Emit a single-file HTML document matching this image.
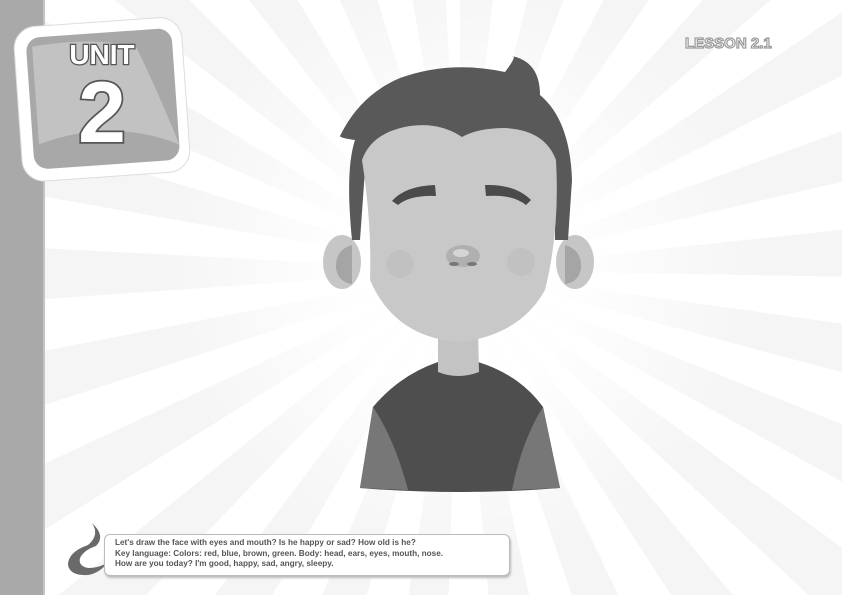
<!DOCTYPE html>
<html><head><meta charset="utf-8"><style>
html,body{margin:0;padding:0;}
body{width:842px;height:595px;overflow:hidden;position:relative;background:#fff;font-family:"Liberation Sans",sans-serif;}
.rays{position:absolute;left:0;top:0;width:842px;height:595px;background:repeating-conic-gradient(from 0deg at 460px 270px,#f5f5f5 0deg 7deg,#ffffff 7deg 14deg);}
.glow{position:absolute;left:0;top:0;width:842px;height:595px;background:radial-gradient(circle at 460px 270px,#fff 0px,rgba(255,255,255,0.9) 120px,rgba(255,255,255,0) 300px);}
.bar{position:absolute;left:0;top:0;width:43px;height:595px;background:#a9a9a9;border-right:2px solid #c4c4c4;}
.lesson{position:absolute;left:685px;top:35px;font:bold 15px "Liberation Sans",sans-serif;color:#fff;-webkit-text-stroke:1.2px #9a9a9a;}
.note{position:absolute;left:104px;top:534px;width:404px;height:40px;background:#fff;border:1px solid #bbb;border-radius:6px;box-shadow:1px 2px 2px #bbb;}
.note p{margin:0;position:absolute;left:10px;top:3px;font:bold 8.2px/10.5px "Liberation Sans",sans-serif;color:#555;white-space:nowrap;}
</style></head><body>
<div class="rays"></div>
<div class="glow"></div>
<div class="bar"></div>
<svg width="842" height="595" style="position:absolute;left:0;top:0">
  <g transform="rotate(-4 100 100)">
    <rect x="18" y="22" width="168" height="155" rx="22" fill="#fff" stroke="#ddd" stroke-width="1"/>
    <rect x="30" y="33" width="146" height="132" rx="14" fill="#a8a8a8"/>
    <path d="M36 42 Q100 36 140 50 Q160 100 176 150 Q110 118 36 140 Z" fill="#c2c2c2"/>
  </g>
  <text x="102" y="64" text-anchor="middle" font-family="Liberation Sans" font-weight="bold" font-size="28" fill="#fff" stroke="#555" stroke-width="2.5" paint-order="stroke">UNIT</text>
  <text x="102" y="142" text-anchor="middle" font-family="Liberation Sans" font-weight="bold" font-size="86" fill="#fff" stroke="#555" stroke-width="3.5" paint-order="stroke">2</text>

  <path d="M438 362 L478 362 Q520 375 543 407 L560 488 Q460 496 360 488 L373 407 Q400 375 438 362 Z" fill="#4e4e4e"/>
  <path d="M373 407 Q395 440 408 490 L360 488 Z" fill="#777"/>
  <path d="M543 407 Q522 440 512 490 L560 488 Z" fill="#777"/>
  <path d="M438 330 L478 330 L479 372 Q458 380 438 372 Z" fill="#c3c3c3"/>
  <ellipse cx="342" cy="262" rx="19" ry="27" fill="#c6c6c6"/>
  <path d="M352 245 Q335 250 336 268 Q338 282 352 284 Z" fill="#a5a5a5"/>
  <ellipse cx="575" cy="262" rx="19" ry="27" fill="#c6c6c6"/>
  <path d="M565 245 Q582 250 581 268 Q579 282 565 284 Z" fill="#a5a5a5"/>
  <path d="M352 240 Q345 170 355 140 Q340 138 340 136 Q360 95 400 78 Q450 60 505 72 Q518 55 512 56 Q540 62 540 95 Q570 120 572 180 L568 240 L555 240 L555 170 L365 170 L360 240 Z" fill="#595959"/>
  <path d="M362 160 Q372 225 370 280 Q395 338 460 342 Q520 335 545 290 Q560 230 556 160 Q545 130 505 128 Q478 128 462 137 Q440 122 410 126 Q372 132 362 160 Z" fill="#c8c8c8"/>
  <circle cx="400" cy="264" r="14" fill="#bdbdbd" opacity="0.7"/>
  <circle cx="521" cy="262" r="14" fill="#bdbdbd" opacity="0.7"/>
  <path d="M392 201 Q405 186 435 185 L436 196 Q410 195 398 205 Z" fill="#4a4a4a"/>
  <path d="M485 185 Q515 184 531 200 L526 205 Q512 194 486 196 Z" fill="#4a4a4a"/>
  <ellipse cx="463" cy="256" rx="17" ry="11" fill="#b0b0b0"/>
  <ellipse cx="461" cy="253" rx="8" ry="4" fill="#d5d5d5"/>
  <ellipse cx="454" cy="264" rx="5" ry="2" fill="#777"/>
  <ellipse cx="472" cy="264" rx="5" ry="2" fill="#777"/>
  <path d="M92 523 Q100 535 88 545 Q68 552 68 565 Q70 576 88 575 Q100 573 108 562 Q100 568 88 568 Q78 566 80 558 Q84 550 96 546 Q106 536 92 523 Z" fill="#6a6a6a"/>
</svg>
<div class="lesson">LESSON 2.1</div>
<div class="note"><p>Let's draw the face with eyes and mouth? Is he happy or sad? How old is he?<br>Key language: Colors: red, blue, brown, green. Body: head, ears, eyes, mouth, nose.<br>How are you today? I'm good, happy, sad, angry, sleepy.</p></div>
</body></html>
